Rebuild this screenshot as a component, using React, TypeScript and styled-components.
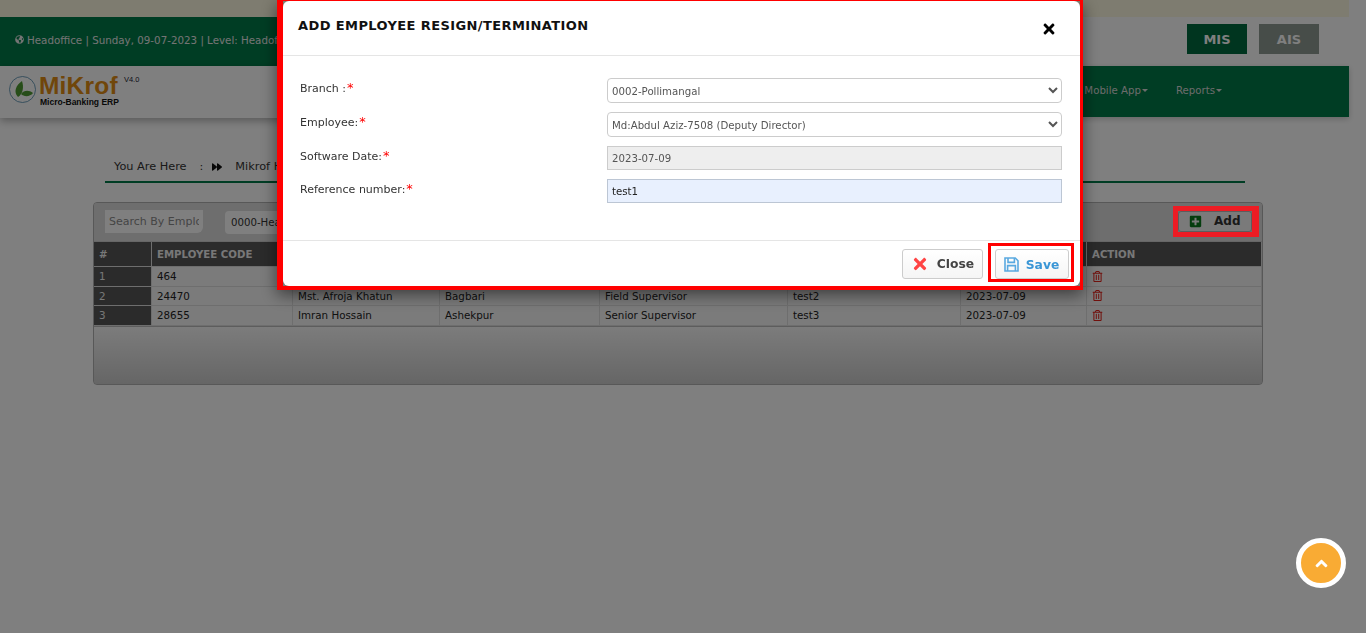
import React from "react";
import styled, { createGlobalStyle } from "styled-components";
import { FaTimes, FaPlusSquare, FaRegTrashAlt, FaGlobeAmericas, FaForward, FaAngleUp } from "react-icons/fa";

const Global = createGlobalStyle`
  html, body { margin: 0; padding: 0; background: #fff; overflow: hidden; }
  * { box-sizing: border-box; }
  body { font-family: "DejaVu Sans", Verdana, sans-serif; font-size: 11px; color: #333; }
`;

const Page = styled.div`width: 1349px; height: 633px;`;
const TopStrip = styled.div`height: 17px; background: #fdf8e0;`;
const InfoRow = styled.div`display: flex; height: 49px; justify-content: space-between;`;
const InfoBand = styled.div`
  width: 800px; background: #007a48; color: #e8e8e8; font-size: 10.3px;
  display: flex; align-items: center; gap: 3px; padding: 0 0 4px 15px; white-space: nowrap;
`;
const Switches = styled.div`display: flex; gap: 12px; padding: 7px 30px 0 0;`;
const SwitchBtn = styled.div<{ $active?: boolean }>`
  width: 60px; height: 30px; display: flex; align-items: center; justify-content: center;
  font-weight: 700; font-size: 13px; color: #fff;
  background: ${(p) => (p.$active ? "#006a3e" : "#8f9b92")};
`;
const NavRow = styled.div`display: flex; height: 52px;`;
const LogoArea = styled.div`
  width: 520px; height: 52px; background: #fff; display: flex; padding: 8px 0 0 9px;
  box-shadow: 0 3px 8px rgba(0,0,0,.3);
`;
const LogoMark = styled.svg`flex: none; margin-top: 2px;`;
const LogoText = styled.div`display: flex; flex-direction: column; margin-left: 3px;`;
const Brand = styled.div`
  font-family: "Liberation Sans", sans-serif; font-weight: 700; font-size: 24.5px; line-height: 23px;
  color: #e08c14; letter-spacing: .2px;
`;
const Tagline = styled.div`
  font-family: "Liberation Sans", sans-serif; font-weight: 700; font-size: 8.5px; line-height: 10px; color: #111;
  margin-left: 1px;
`;
const Version = styled.div`
  font-family: "Liberation Sans", sans-serif; font-size: 7.5px; color: #223; margin: 1px 0 0 5px;
`;
const NavBar = styled.div`
  flex: 1; height: 51px; background: #007a48; display: flex; align-items: center; justify-content: flex-end;
  gap: 28px; padding: 0 127px 2px 0; box-shadow: 0 2px 6px rgba(0,0,0,.2);
`;
const NavItem = styled.div`
  color: #d8d8d8; font-size: 10.2px; display: flex; align-items: center;
  &::after { content: ""; border: 3px solid transparent; border-top-color: #d8d8d8; border-bottom: 0; margin-left: 1px; }
`;
const Breadcrumb = styled.div`
  width: 1140px; height: 25px; margin: 40px 0 0 105px; padding: 0 0 0 9px;
  border-bottom: 2px solid #007a48; display: flex; align-items: flex-start; color: #333; font-size: 11.3px;
  line-height: 17px; white-space: nowrap;
`;
const Crumb = styled.span`margin-right: ${(p: { $gap: number }) => p.$gap}px;`;
const CrumbIcon = styled(FaForward)`margin: 4px 13px 0 0; color: #111; font-size: 10px;`;
const Panel = styled.div`
  width: 1170px; height: 183px; margin: 19px 0 0 93px; border: 1px solid #b0b0b0; border-radius: 4px;
  background: linear-gradient(#f5f5f5, #cacaca); overflow: hidden; display: flex; flex-direction: column;
`;
const Toolbar = styled.div`
  height: 39px; flex: none; display: flex; align-items: center; padding: 0 10px 0 11px; border-bottom: 1px solid #ccc;
  background: #dcdcdc;
`;
const SearchBox = styled.input`
  width: 98px; height: 23px; border: 0; background: #fff; border-radius: 0 0 6px 0; padding: 0 4px;
  font: 11px "DejaVu Sans", sans-serif; margin-top: -2px; outline: none;
  &::placeholder { color: #8a8a8a; }
`;
const BranchFilter = styled.div`
  width: 200px; height: 23px; background: #fff; border-radius: 4px; margin-left: 22px;
  display: flex; align-items: center; padding-left: 6px; font-size: 10.2px; color: #333; white-space: nowrap;
`;
const AddBtn = styled.div`
  width: 74px; height: 21px; margin: 0 0 2px auto; background: #f4f4f4; border: 1px solid #bbb; border-radius: 3px; display: flex;
  align-items: center; padding-left: 10px; gap: 12px; font-weight: 700; font-size: 12px; color: #333;
  svg { color: #0b7a1c; font-size: 13px; flex: none; }
`;
const AddMark = styled.div`
  position: fixed; left: 1173px; top: 206px; width: 86px; height: 31px;
  border-style: solid; border-color: #ed1c24; border-width: 5px 7px 5px 5px;
`;
const Table = styled.div`
  display: grid; flex: none; grid-template-columns: 58px 141px 147px 160px 188px 173px 126px 1fr;
  font-size: 10.3px; color: #333; background: #f6f6f6;
`;
const HeadCell = styled.div`
  height: 25px; background: #565656; color: #f0f0f0; font-weight: 700; font-size: 10.2px; display: flex; align-items: center;
  padding: 0 5px; border-right: 1px solid #ddd; border-bottom: 1px solid #ddd;
`;
const IndexCell = styled.div`
  height: 19.5px; background: #565656; color: #f0f0f0; display: flex; align-items: center; padding-left: 5px;
  border-right: 1px solid #ddd; border-bottom: 1px solid #ddd;
`;
const Cell = styled.div`
  height: 19.5px; display: flex; align-items: center; padding: 0 5px; border-right: 1px solid #ddd; border-bottom: 1px solid #ddd;
  color: #222; white-space: nowrap; overflow: hidden;
  svg { color: #e2231a; font-size: 11px; }
`;
const PanelFoot = styled.div`flex: 1; border-top: 1px solid #bbb; background: linear-gradient(#f8f8f8, #cccccc);`;

const Overlay = styled.div`
  position: fixed; inset: 0; background: rgba(0,0,0,.5); padding-left: 277px;
`;
const ModalFrame = styled.div`
  width: 806px; height: 290px; border-style: solid; border-color: #f00; border-width: 1px 3px 4px 6px;
  box-shadow: 0 5px 15px rgba(0,0,0,.5);
`;
const Modal = styled.div`
  height: 100%; background: #fff; border-radius: 6px; display: flex; flex-direction: column;
`;
const ModalHead = styled.div`
  height: 55px; flex: none; border-bottom: 1px solid #e5e5e5; display: flex; align-items: center; justify-content: space-between;
  padding: 0 23px 6px 15px;
`;
const Title = styled.div`font-weight: 700; font-size: 13px; color: #111; letter-spacing: .4px;`;
const CloseX = styled.div`color: #000; font-size: 16px; display: flex; margin-top: 8px;`;
const ModalBody = styled.div`flex: 1; padding: 22px 18px 0 17px; display: flex; flex-direction: column; gap: 9px;`;
const Row = styled.div<{ $short?: boolean }>`
  display: grid; grid-template-columns: 307px 455px; height: ${(p) => (p.$short ? "24px" : "25px")};
`;
const Label = styled.label`font-size: 11px; color: #333; padding-top: 3px; line-height: 14px;`;
const Req = styled.span`color: #f00; font-size: 13px; margin-left: 1px;`;
const Select = styled.select`
  width: 100%; height: 25px; border: 1px solid #ccc; border-radius: 4px; background: #fff; color: #555;
  font: 10.2px "DejaVu Sans", sans-serif; padding: 2px 0 0;
`;
const TextInput = styled.input<{ $filled?: boolean }>`
  width: 100%; height: 24px; border: 1px solid #ccc; padding: 0 4px; color: #555; outline: none;
  font: 10.2px "DejaVu Sans", sans-serif; background: #eee;
  ${(p) => (p.$filled ? "background:#e8f0fe; color:#222; border-color:#bcc6d4;" : "")}
`;
const ModalFoot = styled.div`
  height: 46px; flex: none; border-top: 1px solid #e5e5e5; display: flex; align-items: flex-start; justify-content: flex-end;
  gap: 5px; padding: 2px 6px 0 0;
`;
const FootBtn = styled.div<{ $tone: string }>`
  height: 30px; border: 1px solid #ccc; border-radius: 3px; background: linear-gradient(#fff,#f5f5f5); display: flex; align-items: center;
  justify-content: center; font-weight: 700; font-size: 12.3px; color: ${(p) => p.$tone};
`;
const CloseBtn = styled(FootBtn)`width: 81px; gap: 8px; margin-top: 6px; svg { color: #f44; font-size: 18px; }`;
const SaveBtn = styled(FootBtn)`width: 74px; gap: 7px; padding-top: 1px;`;
const SaveFrame = styled.div`
  width: 86px; height: 39px; border: 3px solid #f00; display: flex; align-items: flex-end; justify-content: center; padding-left: 1px;
`;
const ScrollTop = styled.div`
  position: fixed; left: 1296px; top: 538px; width: 50px; height: 50px; border-radius: 50%; border: 5px solid #fff;
  background: #f9ab34; color: #fff; display: flex; align-items: center; justify-content: center; font-size: 19px;
`;

const rows = [
  ["1", "464", "", "", "", "", ""],
  ["2", "24470", "Mst. Afroja Khatun", "Bagbari", "Field Supervisor", "test2", "2023-07-09"],
  ["3", "28655", "Imran Hossain", "Ashekpur", "Senior Supervisor", "test3", "2023-07-09"],
];

export default function App() {
  return (
    <>
      <Global />
      <Page>
        <TopStrip />
        <InfoRow>
          <InfoBand><FaGlobeAmericas size={9} /> Headoffice | Sunday, 09-07-2023 | Level: Headoffice</InfoBand>
          <Switches>
            <SwitchBtn $active>MIS</SwitchBtn>
            <SwitchBtn>AIS</SwitchBtn>
          </Switches>
        </InfoRow>
        <NavRow>
          <LogoArea>
            <LogoMark width="27" height="27" viewBox="0 0 27 27">
              <circle cx="13.5" cy="13.5" r="13" fill="#fff" stroke="#4a87a8" strokeWidth=".8" />
              <path d="M9 21C4 16 7 9 13 5c2 6 1 13-4 16z" fill="#4e9a32" />
              <path d="M12 18c3-4 8-4 12-1-3 4-9 4-12 1z" fill="#4e9a32" />
            </LogoMark>
            <LogoText>
              <Brand>MiKrof</Brand>
              <Tagline>Micro-Banking ERP</Tagline>
            </LogoText>
            <Version>V4.0</Version>
          </LogoArea>
          <NavBar>
            <NavItem>Mobile App</NavItem>
            <NavItem>Reports</NavItem>
          </NavBar>
        </NavRow>
        <Breadcrumb>
          <Crumb $gap={13}>You Are Here</Crumb><Crumb $gap={9}>:</Crumb><CrumbIcon /><Crumb $gap={0}>Mikrof Home</Crumb>
        </Breadcrumb>
        <Panel>
          <Toolbar>
            <SearchBox placeholder="Search By Employee" readOnly />
            <BranchFilter>0000-Headoffice</BranchFilter>
            <AddBtn><FaPlusSquare /> Add</AddBtn>
          </Toolbar>
          <Table>
            <HeadCell>#</HeadCell>
            <HeadCell>EMPLOYEE CODE</HeadCell>
            <HeadCell /><HeadCell /><HeadCell /><HeadCell /><HeadCell />
            <HeadCell>ACTION</HeadCell>
            {rows.map((r) => (
              <React.Fragment key={r[0]}>
                <IndexCell>{r[0]}</IndexCell>
                {r.slice(1).map((c, i) => <Cell key={i}>{c}</Cell>)}
                <Cell><FaRegTrashAlt /></Cell>
              </React.Fragment>
            ))}
          </Table>
          <PanelFoot />
        </Panel>
      </Page>
      <Overlay>
        <ModalFrame>
          <Modal>
            <ModalHead>
              <Title>ADD EMPLOYEE RESIGN/TERMINATION</Title>
              <CloseX><FaTimes /></CloseX>
            </ModalHead>
            <ModalBody>
              <Row>
                <Label>Branch :<Req>*</Req></Label>
                <Select defaultValue="a"><option value="a">0002-Pollimangal</option></Select>
              </Row>
              <Row>
                <Label>Employee:<Req>*</Req></Label>
                <Select defaultValue="a"><option value="a">Md:Abdul Aziz-7508 (Deputy Director)</option></Select>
              </Row>
              <Row $short>
                <Label>Software Date:<Req>*</Req></Label>
                <TextInput value="2023-07-09" readOnly />
              </Row>
              <Row $short>
                <Label>Reference number:<Req>*</Req></Label>
                <TextInput $filled value="test1" readOnly />
              </Row>
            </ModalBody>
            <ModalFoot>
              <CloseBtn $tone="#444"><FaTimes /> Close</CloseBtn>
              <SaveFrame>
                <SaveBtn $tone="#3a96d6">
                  <svg width="15" height="15" viewBox="0 0 15 15" fill="none" stroke="#5aa9e0" strokeWidth="1.6">
                    <path d="M1 1h10.2L14 3.8V14H1z" />
                    <path d="M4 1v4.4h6.4V1" />
                    <path d="M3.6 14V8.6h7.8V14" />
                  </svg>
                  Save
                </SaveBtn>
              </SaveFrame>
            </ModalFoot>
          </Modal>
        </ModalFrame>
      </Overlay>
      <AddMark />
      <ScrollTop><FaAngleUp /></ScrollTop>
    </>
  );
}
